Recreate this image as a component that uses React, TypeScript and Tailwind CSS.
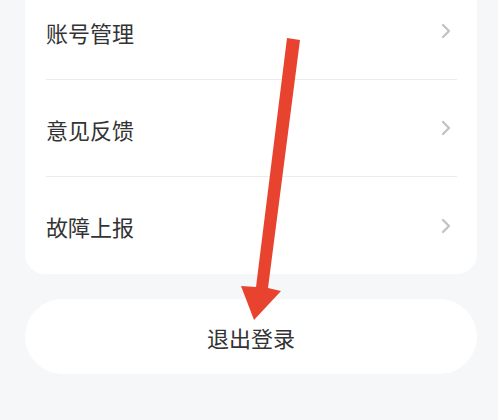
import React from "react";

const rows = ["账号管理", "意见反馈", "故障上报"];

function Chevron() {
  return (
    <svg width="10" height="16" viewBox="0 0 10 16" fill="none">
      <path d="M2 2l6 6-6 6" stroke="#c3c4c6" strokeWidth="2.4" strokeLinecap="round" strokeLinejoin="round" />
    </svg>
  );
}

export default function App() {
  return (
    <div
      className="relative w-[498px] h-[420px] overflow-hidden bg-[#f6f7f9] text-[#333333]"
      style={{ fontFamily: '"Noto Sans CJK SC", "Noto Sans", sans-serif' }}
    >
      <div className="ml-[25px] mr-[21px] -mt-[17px] bg-white rounded-[20px] pr-[20px] pl-[21px]">
        {rows.map((label, i) => (
          <div
            key={label}
            className={`h-[97px] flex items-center justify-between pr-[6px] ${i < rows.length - 1 ? "border-b border-[#ececee]" : ""}`}
          >
            <span className="text-[22px] leading-none pt-[1px]">{label}</span>
            <Chevron />
          </div>
        ))}
      </div>

      <div className="ml-[25px] mr-[21px] mt-[25px] h-[75px] bg-white rounded-full flex items-center justify-center">
        <span className="text-[22px] leading-none pt-[1px]">退出登录</span>
      </div>

      {/* pointer arrow overlay */}
      <svg className="absolute left-0 top-0" width="498" height="420" viewBox="0 0 498 420">
        <polygon
          points="287,38 300,40 268,288 281,291 254,320 241,286 256,287"
          fill="#e8432f"
        />
      </svg>
    </div>
  );
}
